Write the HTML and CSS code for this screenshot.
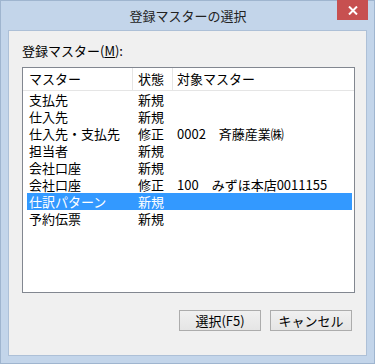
FILE: index.html
```html
<!DOCTYPE html>
<html lang="ja">
<head>
    <meta charset="UTF-8">
    <title>登録マスターの選択</title>
    <link rel="stylesheet" href="styles.css">
</head>
<body>

    <div class="window">
        <!-- Title bar -->
        <div class="titlebar">
            <span></span>
            <span class="title">登録マスターの選択</span>
            <button class="close" title="閉じる">
                <svg width="10" height="9" viewBox="0 0 10 9">
                    <path d="M1 0.5 L9 8.5 M9 0.5 L1 8.5" stroke="#fff" stroke-width="2" fill="none"/>
                </svg>
            </button>
        </div>

        <div class="client">
            <div class="label">登録マスター(<u>M</u>):</div>

            <!-- Master list -->
            <div class="listbox">
                <div class="list-head">
                    <span>マスター</span>
                    <span>状態</span>
                    <span>対象マスター</span>
                </div>
                <div class="row"><span>支払先</span><span>新規</span><span></span></div>
                <div class="row"><span>仕入先</span><span>新規</span><span></span></div>
                <div class="row"><span>仕入先・支払先</span><span>修正</span><span>0002　斉藤産業㈱</span></div>
                <div class="row"><span>担当者</span><span>新規</span><span></span></div>
                <div class="row"><span>会社口座</span><span>新規</span><span></span></div>
                <div class="row"><span>会社口座</span><span>修正</span><span>100　みずほ本店0011155</span></div>
                <div class="row selected"><span>仕訳パターン</span><span>新規</span><span></span></div>
                <div class="row"><span>予約伝票</span><span>新規</span><span></span></div>
            </div>

            <div class="buttons">
                <button class="btn">選択(F5)</button>
                <button class="btn">キャンセル</button>
            </div>
        </div>
    </div>

</body>
</html>
```

FILE: styles.css
```css
* {
    margin: 0;
    padding: 0;
    box-sizing: border-box;
}

body {
    font-family: "Noto Sans CJK JP", "Noto Sans", sans-serif;
    font-size: 13px;
    color: #000;
    background: #fff;
}

/* Window frame */
.window {
    width: 375px;
    height: 364px;
    background: #c3d5ea;
    border: 1px solid #9fb5cf;
    padding: 0 7px 7px 7px;
    display: flex;
    flex-direction: column;
}

.titlebar {
    height: 29px;
    display: grid;
    grid-template-columns: 1fr auto 1fr;
    align-items: start;
}

.titlebar .title {
    font-size: 13px;
    line-height: 29px;
    color: #222;
    padding-left: 1px;
}

.titlebar .close {
    justify-self: end;
    margin-right: -1px;
    width: 31px;
    height: 20px;
    border: none;
    background: #c75050;
    display: flex;
    align-items: center;
    justify-content: center;
    margin-top: -1px;
}

/* Client area */
.client {
    flex: 1;
    background: #f0f0f0;
    border: 1px solid #adc0d7;
    padding: 12px 11px 0 13px;
}

.label {
    line-height: 16px;
    height: 16px;
    margin-bottom: 8px;
}

.label u {
    text-underline-offset: 1px;
}

.listbox {
    height: 226px;
    background: #fff;
    border: 1px solid #828790;
    line-height: 17px;
}

.list-head {
    display: grid;
    grid-template-columns: 110px 40px 1fr;
    height: 23px;
    line-height: 22px;
    border-bottom: 1px solid #e5e5e5;
}

.list-head span {
    padding-left: 6px;
    border-right: 1px solid #e5e5e5;
}

.list-head span:nth-child(2) {
    padding-left: 5px;
}

.list-head span:nth-child(3) {
    padding-left: 4px;
    border-right: none;
}

.row {
    display: grid;
    grid-template-columns: 106px 40px 1fr;
    margin: 0 2px 0 4px;
    height: 17px;
    white-space: nowrap;
}

.row span:first-child {
    padding-left: 2px;
}

.row span:nth-child(2) {
    padding-left: 5px;
}

.row span:nth-child(3) {
    padding-left: 4px;
}

.row.selected {
    background: #3399ff;
    color: #fff;
}

/* Dialog buttons */
.buttons {
    display: flex;
    justify-content: flex-end;
    gap: 9px;
    margin-top: 17px;
    margin-right: 3px;
}

.btn {
    width: 82px;
    height: 21px;
    border: 1px solid #acacac;
    background: linear-gradient(#f0f0f0, #e5e5e5);
    font-family: "Noto Sans CJK JP", sans-serif;
    font-size: 13px;
    line-height: 19px;
    color: #000;
}
```
